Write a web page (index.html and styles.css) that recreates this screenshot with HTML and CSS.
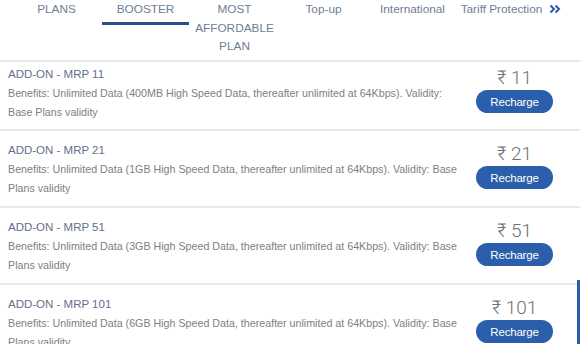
FILE: index.html
```html
<!DOCTYPE html>
<html>
<head>
<meta charset="utf-8">
<link rel="stylesheet" href="styles.css">
</head>
<body>
<div class="page">
  <nav class="tabs">
    <div class="tab">PLANS</div>
    <div class="tab active"><span>BOOSTER</span></div>
    <div class="tab wrap">MOST AFFORDABLE PLAN</div>
    <div class="tab">Top-up</div>
    <div class="tab">International</div>
    <div class="tab">Tariff Protection</div>
    <div class="more">
      <svg width="12" height="10" viewBox="0 0 12 10"><path d="M1.5 1.5 L5 5 L1.5 8.5 M6.5 1.5 L10 5 L6.5 8.5" fill="none" stroke="#2a5caa" stroke-width="2"/></svg>
    </div>
  </nav>
  <div class="list">
    <div class="card first">
      <div class="info">
        <div class="title">ADD-ON - MRP 11</div>
        <div class="desc">Benefits: Unlimited Data (400MB High Speed Data, thereafter unlimited at 64Kbps). Validity: Base Plans validity</div>
      </div>
      <div class="action">
        <div class="price">₹ 11</div>
        <button class="btn">Recharge</button>
      </div>
    </div>
    <div class="card">
      <div class="info">
        <div class="title">ADD-ON - MRP 21</div>
        <div class="desc">Benefits: Unlimited Data (1GB High Speed Data, thereafter unlimited at 64Kbps). Validity: Base Plans validity</div>
      </div>
      <div class="action">
        <div class="price">₹ 21</div>
        <button class="btn">Recharge</button>
      </div>
    </div>
    <div class="card">
      <div class="info">
        <div class="title">ADD-ON - MRP 51</div>
        <div class="desc">Benefits: Unlimited Data (3GB High Speed Data, thereafter unlimited at 64Kbps). Validity: Base Plans validity</div>
      </div>
      <div class="action">
        <div class="price">₹ 51</div>
        <button class="btn">Recharge</button>
      </div>
    </div>
    <div class="card">
      <div class="info">
        <div class="title">ADD-ON - MRP 101</div>
        <div class="desc">Benefits: Unlimited Data (6GB High Speed Data, thereafter unlimited at 64Kbps). Validity: Base Plans validity</div>
      </div>
      <div class="action">
        <div class="price">₹ 101</div>
        <button class="btn">Recharge</button>
      </div>
    </div>
  </div>
  <div class="edge"></div>
</div>
</body>
</html>
```
FILE: styles.css
```css
* { box-sizing: border-box; }
html, body { margin: 0; padding: 0; background: #fff; }
body {
  width: 580px;
  height: 344px;
  overflow: hidden;
  font-family: "Liberation Sans", Arial, "Noto Sans", sans-serif;
}
.page { position: relative; height: 344px; }
.tabs {
  display: flex;
  align-items: flex-start;
  padding-left: 12px;
  height: 60px;
}
.tab {
  width: 89px;
  text-align: center;
  font-size: 11.8px;
  line-height: 18.5px;
  color: #6f7d95;
  white-space: nowrap;
}
.tab.wrap {
  white-space: normal;
  padding: 0 4px;
}
.tab.active {
  border-bottom: 3px solid #2b4f8e;
  height: 25px;
  margin: 0 1px;
  width: 87px;
}
.more {
  display: flex;
  align-items: center;
  height: 18px;
  margin-left: 3px;
}
.card {
  display: flex;
  justify-content: space-between;
  border-top: 2px solid #e8e8e8;
  padding: 10px 27px 7px 8px;
  height: 77px;
}
.card.first { padding-top: 3px; height: 69px; }
.info { width: 460px; }
.title {
  font-size: 11.5px;
  line-height: 19px;
  color: #63708a;
}
.desc {
  font-size: 10.7px;
  line-height: 19px;
  color: #808080;
}
.action {
  width: 77px;
  padding-top: 2px;
  display: flex;
  flex-direction: column;
  align-items: center;
}
.price {
  font-family: "Roboto", "DejaVu Sans", "Noto Sans", sans-serif;
  font-weight: 300;
  font-size: 19px;
  line-height: 22px;
  color: #707070;
}
.btn {
  width: 77px;
  height: 23px;
  border: 0;
  border-radius: 12px;
  background: #2b5fab;
  color: #fff;
  font-family: "Liberation Sans", Arial, sans-serif;
  font-size: 11.5px;
  letter-spacing: -0.2px;
  padding: 0;
  margin-top: 1px;
}
.edge {
  position: absolute;
  right: 0;
  top: 280px;
  width: 3px;
  bottom: 0;
  background: #2a5dab;
}
```
